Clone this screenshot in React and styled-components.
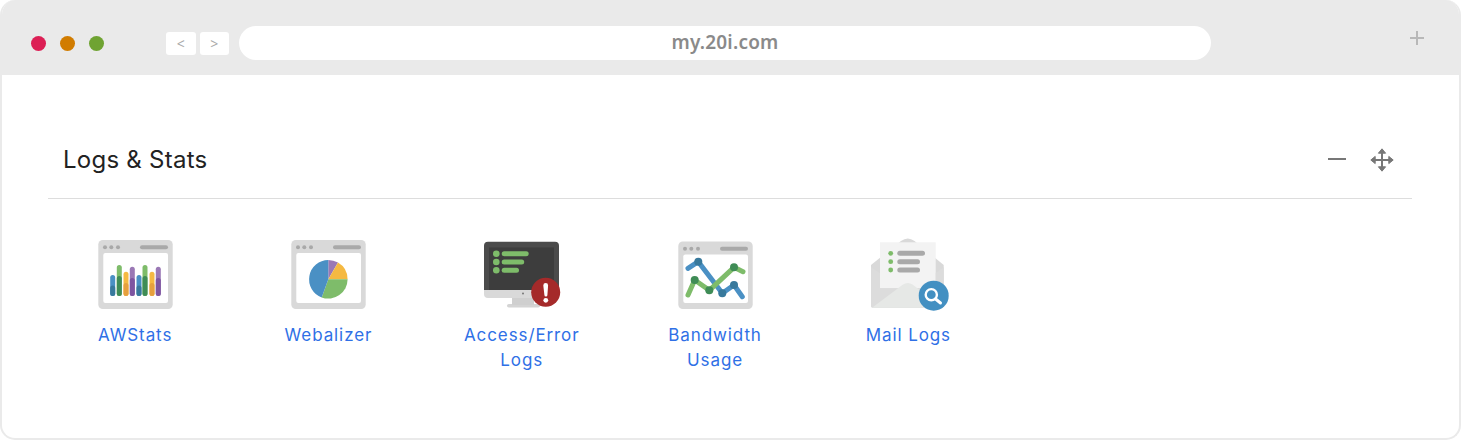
import React from 'react'
import styled, { createGlobalStyle } from 'styled-components'

const GlobalStyle = createGlobalStyle`
  html, body {
    margin: 0;
    padding: 0;
    background: #fff;
  }
`

const Frame = styled.div`
  box-sizing: border-box;
  width: 1461px;
  height: 440px;
  background: #fff;
  border: 2px solid #eaeaea;
  border-top: 0;
  border-radius: 15px;
  overflow: hidden;
  font-family: Inter, sans-serif;
`

const BrowserBar = styled.div`
  display: flex;
  align-items: center;
  height: 75px;
  margin: 0 -2px;
  padding: 11px 36px 0 31px;
  box-sizing: border-box;
  background: #eaeaea;
`

const Lights = styled.div`
  display: flex;
  gap: 14px;
  margin-right: 62px;
`

const Light = styled.span`
  width: 15px;
  height: 15px;
  border-radius: 50%;
  background: ${p => p.$color};
`

const NavButtons = styled.div`
  display: flex;
  gap: 4px;
  margin-right: 10px;
`

const NavButton = styled.span`
  display: flex;
  align-items: center;
  justify-content: center;
  width: 29.5px;
  height: 23px;
  border-radius: 3px;
  background: #fff;
  color: #aaa;
  font-size: 14px;
  font-family: "Noto Sans", sans-serif;
`

const Address = styled.div`
  flex: 0 0 972px;
  height: 34px;
  border-radius: 17px;
  background: #fff;
  color: #8a8a8a;
  font: 600 19px/33px "Noto Sans", sans-serif;
  letter-spacing: 0.2px;
  text-align: center;
`

const NewTab = styled.svg`
  width: 14px;
  height: 14px;
  margin: -10px 1px 0 auto;
  stroke: #b8b8b8;
  stroke-width: 2;
`

const Panel = styled.section`
  padding: 0 47px 0 46px;
`

const PanelHead = styled.header`
  display: flex;
  align-items: center;
  height: 124px;
  padding: 46px 15px 0 15px;
  box-sizing: border-box;
  border-bottom: 1px solid #ddd;
`

const PanelTitle = styled.h2`
  flex: 1;
  margin: 0;
  color: #222;
  font-size: 24px;
  font-weight: 400;
  letter-spacing: 0.25px;
`

const Collapse = styled.span`
  width: 18px;
  height: 2px;
  margin: 0 24px 2px 0;
  background: #777;
`

const MoveIcon = styled.svg`
  width: 24px;
  height: 24px;
  margin-right: 3px;
  fill: #777;
  stroke: #777;
`

const Tools = styled.div`
  display: grid;
  grid-template-columns: repeat(5, 193.3px);
  margin: 37px 0 0 -10px;
`

const Tool = styled.a`
  display: flex;
  flex-direction: column;
  align-items: center;
  color: #2f70e6;
  font-size: 17px;
  line-height: 25px;
  letter-spacing: 0.9px;
  text-align: center;
`

const ToolIcon = styled.svg`
  display: block;
  width: 90px;
  height: 76px;
  margin-bottom: 11px;
`

const ToolLabel = styled.span`
  max-width: 130px;
  padding-left: 1px;
`

const COLORS = {
  frame: '#d9d9d9',
  dot: '#a9a9a9',
  blue: '#4a90c4',
  blueDark: '#38799c',
  green: '#7ebc6a',
  greenDark: '#3f8c56',
  yellow: '#f5b942',
  yellowDark: '#e6a03e',
  purple: '#9a78b5',
  purpleDark: '#7d55a0',
}

const Window = ({ y = 4, children }) => (
  <>
    <rect x="8.3" y={y} width="74.4" height={69 - (y - 4)} rx="4.5" fill={COLORS.frame} />
    <rect x="13.3" y={y + 13} width="64.7" height={50 - (y - 4)} rx="2" fill="#fff" />
    <circle cx="15" cy={y + 7.3} r="2" fill={COLORS.dot} />
    <circle cx="21.3" cy={y + 7.3} r="2" fill={COLORS.dot} />
    <circle cx="28" cy={y + 7.3} r="2" fill={COLORS.dot} />
    <rect x="50" y={y + 5.3} width="28" height="4" rx="2" fill={COLORS.dot} />
    {children}
  </>
)

const BARS = [
  [22.7, 39, 50, 'blue', 'blueDark'],
  [29.3, 29, 40.5, 'green', 'greenDark'],
  [36, 35.7, 47.5, 'yellow', 'yellowDark'],
  [42.3, 30.7, 42.5, 'purple', 'purpleDark'],
  [49, 39, 50, 'blue', 'blueDark'],
  [55, 29, 40.5, 'green', 'greenDark'],
  [62, 35.7, 47.5, 'yellow', 'yellowDark'],
  [68.3, 30.7, 42.5, 'purple', 'purpleDark'],
]

const AwstatsIcon = () => (
  <ToolIcon viewBox="0 0 90 76">
    <Window>
      {BARS.map(([x, top, mid, light, dark]) => (
        <g key={x} strokeWidth="5" strokeLinecap="round">
          <line x1={x} x2={x} y1={top + 2.5} y2="57.5" stroke={COLORS[light]} />
          <line x1={x} x2={x} y1={mid + 2} y2="57.5" stroke={COLORS[dark]} />
        </g>
      ))}
    </Window>
  </ToolIcon>
)

const WebalizerIcon = () => (
  <ToolIcon viewBox="0 0 90 76">
    <Window>
      <path d="M45.3 43.3V24A19.3 19.3 0 0 1 55 26.6Z" fill={COLORS.purple} />
      <path d="M45.3 43.3L55 26.6A19.3 19.3 0 0 1 64.6 43.3Z" fill={COLORS.yellow} />
      <path d="M45.3 43.3H64.6A19.3 19.3 0 0 1 38.7 61.4Z" fill={COLORS.green} />
      <path d="M45.3 43.3L38.7 61.4A19.3 19.3 0 0 1 45.3 24Z" fill={COLORS.blue} />
    </Window>
  </ToolIcon>
)

const AccessIcon = () => (
  <ToolIcon viewBox="0 0 90 76">
    <rect x="31" y="68" width="33" height="3.6" rx="1.8" fill="#d4d4d4" />
    <rect x="36" y="60" width="22" height="9" fill="#cfcfcf" />
    <path d="M8 54H83V58A4 4 0 0 1 79 62H12A4 4 0 0 1 8 58Z" fill={COLORS.frame} />
    <path d="M12 5.7H79A4 4 0 0 1 83 9.7V54H8V9.7A4 4 0 0 1 12 5.7Z" fill="#4b4b4b" />
    <rect x="13" y="11.5" width="65" height="42.5" fill="#3d3d3d" />
    <circle cx="47" cy="57.5" r="1" fill="#777" />
    <g fill={COLORS.green}>
      <circle cx="20.3" cy="17.7" r="3.3" />
      <circle cx="20.3" cy="26" r="3.3" />
      <circle cx="20.3" cy="34.3" r="3.3" />
      <rect x="25.7" y="15.2" width="27" height="5" rx="2.5" />
      <rect x="25.7" y="23.5" width="22.5" height="5" rx="2.5" />
      <rect x="25.7" y="31.8" width="17.3" height="5" rx="2.5" />
    </g>
    <circle cx="69.7" cy="56.3" r="14.5" fill="#a52a2a" />
    <path d="M67.3 49.5a2.4 2.4 0 0 1 4.8 0L71.4 59a1.5 1.5 0 0 1-3 0Z" fill="#fff" />
    <circle cx="69.8" cy="64.3" r="2.4" fill="#fff" />
  </ToolIcon>
)

const BandwidthIcon = () => (
  <ToolIcon viewBox="0 0 90 76">
    <Window y={5.4}>
      <g fill="none" strokeWidth="5" strokeLinecap="round" strokeLinejoin="round">
        <polyline points="18,32.3 28.3,25.7 52.3,57.3 64,49 72.3,60.7" stroke={COLORS.blue} />
        <polyline points="18,59 24.7,44 39.3,54.3 64,31.3 73,35.7" stroke={COLORS.green} />
      </g>
      <circle cx="28.3" cy="25.7" r="4" fill={COLORS.blueDark} />
      <circle cx="52.3" cy="57.3" r="4" fill={COLORS.blueDark} />
      <circle cx="64" cy="49" r="4" fill={COLORS.blueDark} />
      <circle cx="24.7" cy="44" r="4" fill={COLORS.greenDark} />
      <circle cx="39.3" cy="54.3" r="4" fill={COLORS.greenDark} />
      <circle cx="64" cy="31.3" r="4" fill={COLORS.greenDark} />
    </Window>
  </ToolIcon>
)

const MailIcon = () => (
  <ToolIcon viewBox="0 0 90 76">
    <path d="M8 29L38 5Q44.7 0 51.5 5L80.7 29V69.7A2 2 0 0 1 78.7 71.7H10A2 2 0 0 1 8 69.7Z" fill={COLORS.frame} />
    <rect x="17" y="6.3" width="55.7" height="46" fill="#f3f3f3" />
    <g fill={COLORS.green}>
      <circle cx="27.7" cy="17.3" r="2.4" />
      <circle cx="27.7" cy="25.7" r="2.4" />
      <circle cx="27.7" cy="34" r="2.4" />
    </g>
    <g fill={COLORS.dot}>
      <rect x="34.3" y="14.8" width="27.7" height="5" rx="2.5" />
      <rect x="34.3" y="23.2" width="22.7" height="5" rx="2.5" />
      <rect x="34.3" y="31.5" width="22.7" height="5" rx="2.5" />
    </g>
    <path d="M8 31L17 37V52.3H72.7V37L80.7 31V69.7A2 2 0 0 1 78.7 71.7H10A2 2 0 0 1 8 69.7Z" fill="#dcdcdc" />
    <path d="M9 71.7L40 48.5Q44.7 45.5 49.5 48.5L80 71.7Z" fill="#e6e8e6" />
    <circle cx="70.7" cy="59.7" r="15" fill="#4390c2" />
    <circle cx="68.3" cy="58.7" r="5.6" fill="none" stroke="#fff" strokeWidth="2.4" />
    <line x1="72.6" y1="63" x2="77.5" y2="67" stroke="#fff" strokeWidth="3" strokeLinecap="round" />
  </ToolIcon>
)

const TOOLS = [
  { label: 'AWStats', Icon: AwstatsIcon },
  { label: 'Webalizer', Icon: WebalizerIcon },
  { label: 'Access/Error Logs', Icon: AccessIcon },
  { label: 'Bandwidth Usage', Icon: BandwidthIcon },
  { label: 'Mail Logs', Icon: MailIcon },
]

export default function App() {
  return (
    <Frame>
      <GlobalStyle />
      <BrowserBar>
        <Lights>
          <Light $color="#dc1f55" />
          <Light $color="#d17c00" />
          <Light $color="#6fa332" />
        </Lights>
        <NavButtons>
          <NavButton>&lt;</NavButton>
          <NavButton>&gt;</NavButton>
        </NavButtons>
        <Address>my.20i.com</Address>
        <NewTab viewBox="0 0 14 14">
          <path d="M7 0V14M0 7H14" />
        </NewTab>
      </BrowserBar>
      <Panel>
        <PanelHead>
          <PanelTitle>Logs &amp; Stats</PanelTitle>
          <Collapse />
          <MoveIcon viewBox="0 0 24 24">
            <path d="M12 2.5V21.5M2.5 12H21.5" fill="none" strokeWidth="2" />
            <path d="M12 .8L15.6 5.2H8.4ZM12 23.2L15.6 18.8H8.4ZM.8 12L5.2 8.4V15.6ZM23.2 12L18.8 8.4V15.6Z" strokeWidth="1" strokeLinejoin="round" />
          </MoveIcon>
        </PanelHead>
        <Tools>
          {TOOLS.map(({ label, Icon }) => (
            <Tool key={label}>
              <Icon />
              <ToolLabel>{label}</ToolLabel>
            </Tool>
          ))}
        </Tools>
      </Panel>
    </Frame>
  )
}
